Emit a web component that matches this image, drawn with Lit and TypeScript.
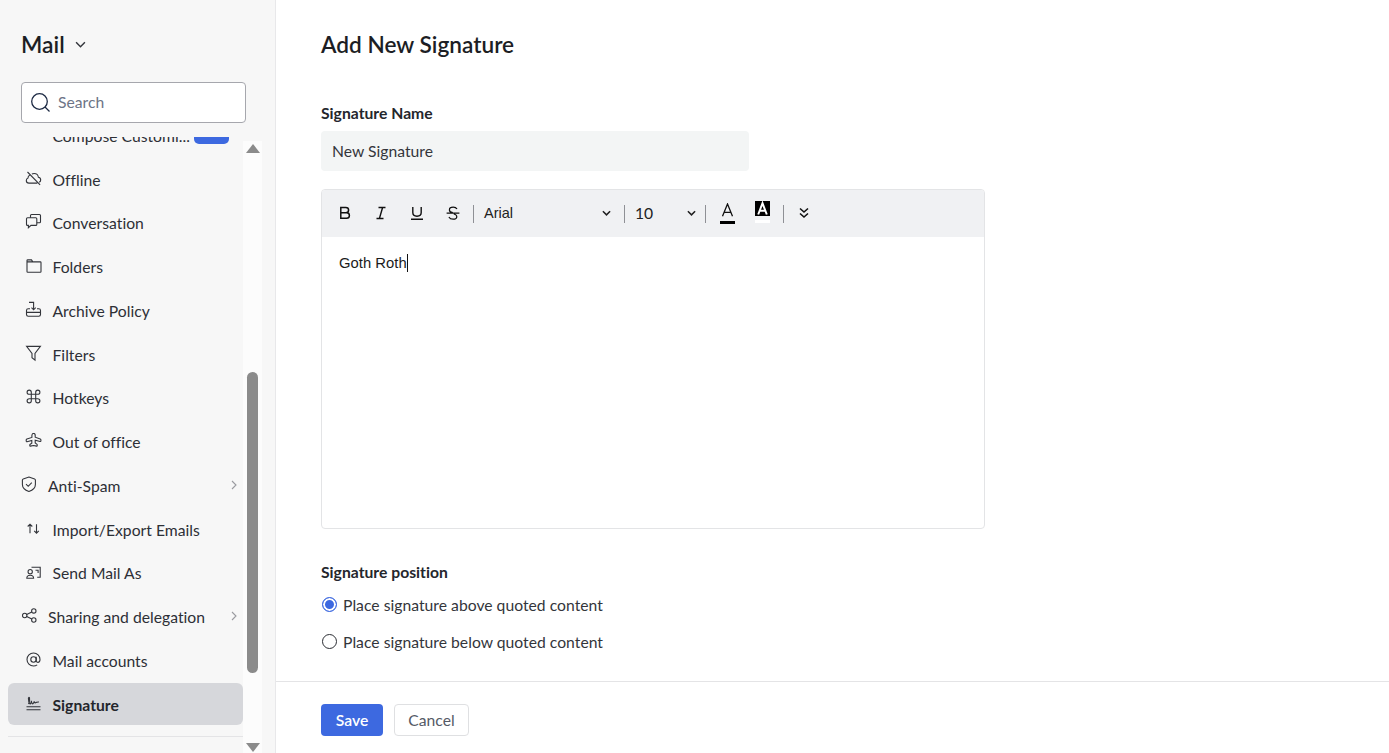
import { LitElement, html, css, svg } from "lit";
import { customElement } from "lit/decorators.js";

const ic: Record<string, any> = {
  offline: svg`<path d="M4.700 5.300C3.600 5.800 3 6.800 3 7.900c-1.100.4-1.700 1.400-1.700 2.500 0 1.500 1.200 2.700 2.700 2.700h8.300M14.200 12.300c.9-.5 1.500-1.400 1.500-2.400 0-1.300-1-2.400-2.300-2.600-.3-2.200-2.100-3.800-4.300-3.800-.8 0-1.500.2-2.200.6M2.500 2l12.600 12.900"/>`,
  conv: svg`<path d="M5.500 4.800V2.500c0-.6.400-1 1-1h8c.6 0 1 .4 1 1v6.300c0 .6-.4 1-1 1h-2.700"/><path d="M2.500 4.800h8.300c.6 0 1 .4 1 1v5.600c0 .6-.4 1-1 1H6l-2.600 2.300v-2.300h-.9c-.6 0-1-.4-1-1V5.800c0-.6.4-1 1-1z"/>`,
  folder: svg`<path d="M2 3.600v11c0 .4.300.7.700.7h12.600c.4 0 .7-.3.700-.7V5.600c0-.4-.3-.7-.7-.7H7.800L6.500 2.900H2.700c-.4 0-.7.3-.7.7zM2 4.900h5.800"/>`,
  archive: svg`<path d="M5 7.800H3.200c-1 0-1.700.7-1.700 1.600v4.200c0 1 .7 1.700 1.700 1.700h10.600c1 0 1.700-.7 1.700-1.700V9.400c0-.9-.7-1.600-1.700-1.600H12M1.500 11.400h14M4 1.400h4.600v7.400M6.500 6.700l2.100 2.100 2.100-2.100"/>`,
  filter: svg`<path d="M1.600 1.400h13.800L10 8.400v6.800l-3-2.400V8.400z"/>`,
  hotkeys: svg`<path d="M6.300 6.300h4.400v4.400H6.300zM6.300 6.300V4.200a2.100 2.100 0 1 0-2.100 2.100zM10.700 6.300h2.100a2.100 2.100 0 1 0-2.100-2.100zM6.300 10.700H4.200a2.100 2.100 0 1 0 2.100 2.100zM10.700 10.700v2.100a2.100 2.100 0 1 0 2.100-2.100z"/>`,
  plane: svg`<path d="M8.500 1.300c1 0 1.700 1 1.700 2.300v1.600l5 1.700c.5.200.7.500.7 1v1c0 .4-.4.700-.8.600l-4.900-1.200v2.700l1.600 1.100c.3.200.4.400.4.700v.9c0 .3-.3.500-.6.400l-3.100-.6-3.100.6c-.3.100-.6-.1-.6-.4V13c0-.3.100-.5.400-.7l1.600-1.100V8.500L2 9.700c-.4.100-.8-.2-.8-.6v-1c0-.5.200-.8.700-1l5-1.700V3.600c0-1.300.7-2.300 1.700-2.300z"/>`,
  shield: svg`<path d="M7.900 1l5.700 1.900c.5.200.8.600.8 1.100v4.400c0 3.300-2.700 5.700-6.500 7.100-3.800-1.400-6.500-3.800-6.500-7.100V4c0-.5.3-.9.800-1.100zM5 8.100l2.200 2.200 3.600-3.700"/>`,
  imp: svg`<path d="M5 13.200V4.200M2.700 6.500L5 4.200l2.300 2.300M11.500 4.200v9M9.200 10.900l2.300 2.300 2.300-2.300"/>`,
  send: svg`<path d="M6.500 4.300h8.700v10h-3M1.800 15.300c0-2 1.500-3 3.400-3s3.400 1 3.400 3zM5.200 10.800a2.100 2.100 0 1 0 0-4.300 2.100 2.100 0 0 0 0 4.300zM10.500 7.300h2.600v2.600"/>`,
  share: svg`<circle cx="3.700" cy="8.500" r="2.200"/><circle cx="12.800" cy="3.900" r="2.200"/><circle cx="12.800" cy="13" r="2.200"/><path d="M5.700 7.500l5.100-2.600M5.700 9.500l5.100 2.600"/>`,
  at: svg`<circle cx="8.500" cy="8.500" r="2.700"/><path d="M11.200 5.800v4c0 .9.700 1.600 1.600 1.600s2.200-.9 2.200-2.900c0-3.600-2.900-6.500-6.500-6.500S2 4.900 2 8.500 4.900 15 8.500 15c1.400 0 2.600-.4 3.700-1.100"/>`,
  sign: svg`<path d="M1.500 14.800h14M1.500 11.800h14M3.500 9c.9-2 1.400-4.500 1-6-.3-1-1.100-.7-1.100.3 0 2 .4 4.500 1.500 5.500.8.500 1.300-1.500 1.500-3 .1 1.800.6 3.300 1.500 3 .7-.2 1-1.500 1.300-2.500.3 1.500 1 2 1.700 1.200.5-.5 1-.6 3.100-.5"/>`,
};

const items: [string, string, boolean?][] = [
  ["offline", "Offline"],
  ["conv", "Conversation"],
  ["folder", "Folders"],
  ["archive", "Archive Policy"],
  ["filter", "Filters"],
  ["hotkeys", "Hotkeys"],
  ["plane", "Out of office"],
  ["shield", "Anti-Spam", true],
  ["imp", "Import/Export Emails"],
  ["send", "Send Mail As"],
  ["share", "Sharing and delegation", true],
  ["at", "Mail accounts"],
];

@customElement("app-root")
export class AppRoot extends LitElement {
  static styles = css`
    :host { display: block; width: 1389px; height: 753px; overflow: hidden; font-family: Lato, "Noto Sans", sans-serif; color: #1f2127; background: #fff; font-size: 15.700px; letter-spacing: .02px; }
    * { box-sizing: border-box; }
    .page { display: flex; height: 753px; }
    .side { width: 276px; flex: none; background: #f7f7f7; border-right: 1px solid #e8e8ea; display: flex; flex-direction: column; height: 753px; }
    .brand { height: 82px; padding: 29px 0 0 21px; display: flex; align-items: flex-start; gap: 10px; font-size: 22.800px; line-height: 30px; font-weight: 600; color: #1c1e24; }
    .brand svg { margin-top: 12px; }
    .search { margin-left: 21px; width: 225px; height: 41px; flex: none; background: #fff; border: 1px solid #a6a7ad; border-radius: 4px; display: flex; align-items: center; padding-left: 8px; gap: 7px; color: #6d7486; padding-bottom: 1px; }
    .body { flex: 1; display: flex; min-height: 0; margin-top: 14px; }
    .listwrap { width: 243px; flex: none; overflow: hidden; }
    .list { margin-top: -23.050px; padding-left: 8px; }
    .item { height: 43.750px; width: 235px; display: flex; align-items: center; padding-left: 17px; gap: 10.500px; color: #2d2f36; position: relative; }
    .item svg.i { width: 17px; height: 17px; flex: none; fill: none; stroke: #33353b; stroke-width: 1.100; margin-top: -3px; }
    .item.g { padding-left: 13px; gap: 10px; }
    .item .chev { position: absolute; right: 6px; top: 16px; }
    .item.sel { height: 42px; background: #d6d7db; border-radius: 6px; font-weight: 700; color: #24262c; padding-top: 2px; }
    .compose { padding-top: 1px; }
    .compose span { white-space: nowrap; }
    .compose .pill { width: 35px; height: 16px; background: #3d69e0; border-radius: 5px; margin-left: -6.500px; }
    .blank { width: 17px; flex: none; }
    .rule { height: 1px; background: #e4e4e6; margin-top: 11px; width: 235px; }
    .track { width: 19px; flex: none; margin-top: 4px; background: #fcfcfc; display: flex; flex-direction: column; align-items: center; }
    .track .sp1 { height: 219px; flex: none; }
    .thumb { width: 11px; height: 301px; border-radius: 6px; background: #8b8b8b; flex: none; }
    .track .sp2 { flex: 1; }
    .main { flex: 1; min-width: 0; display: flex; flex-direction: column; }
    .content { flex: 1; padding: 30px 0 0 45px; }
    h1 { margin: 0; font-size: 22.600px; line-height: 30px; font-weight: 600; color: #1c1e24; }
    .lab { line-height: 20px; font-weight: 700; color: #24262c; }
    .lab.a { margin-top: 43px; }
    .inp { margin-top: 8px; width: 428px; height: 40px; background: #f3f5f5; border-radius: 4px; padding-left: 11px; display: flex; align-items: center; color: #33353b; }
    .editor { margin-top: 18px; width: 664px; height: 340px; border: 1px solid #e3e4e6; border-radius: 4px; overflow: hidden; }
    .tb { height: 47px; padding-bottom: 1px; background: #f0f1f3; display: flex; align-items: center; color: #111; }
    .btn { width: 36px; display: flex; justify-content: center; align-items: center; }
    .tb .first { margin-left: 5px; }
    .sep { width: 1px; height: 18px; margin-top: 1px; background: #8f9095; flex: none; }
    .sep.s1 { margin-left: 2px; }
    .fam { width: 150px; padding: 0 13px 0 10px; font: 14.500px "Liberation Sans", Arial, sans-serif; color: #222; display: flex; align-items: center; justify-content: space-between; }
    .size { width: 80px; padding: 0 9px 0 10px; color: #222; display: flex; align-items: center; justify-content: space-between; }
    .colorbtn { width: 42px; display: flex; justify-content: center; margin-top: 1px; }
    .bgbtn { width: 28px; margin-right: 7px; display: flex; justify-content: center; margin-top: -2px; }
    .more { width: 40px; }
    .ed { padding: 16px 17px; font: 14.800px/20px "Liberation Sans", Arial, sans-serif; color: #1b1b1b; display: flex; align-items: center; }
    .caret { width: 1px; height: 18px; background: #111; }
    .lab.sp { margin-top: 33px; }
    .radio { display: flex; align-items: center; gap: 6px; line-height: 20px; color: #33353b; height: 20px; margin-top: 17px; }
    .radio.first { margin-top: 13px; }
    .rb { width: 15px; height: 15px; margin-left: 1px; border-radius: 50%; border: 1px solid #2b2d33; background: #fff; flex: none; margin-top: -2px; }
    .rb.on { border: 1px solid #3d69e0; box-shadow: inset 0 0 0 2px #fff; background: #3d69e0; }
    .foot { height: 72px; border-top: 1px solid #e4e4e6; display: flex; align-items: flex-start; padding: 22px 0 0 45px; gap: 11px; flex: none; }
    .fbtn { height: 32px; border-radius: 4px; display: flex; align-items: center; justify-content: center; }
    .save { width: 62px; background: #3d69e0; color: #fff; font-weight: 600; }
    .cancel { width: 75px; background: #fff; border: 1px solid #dfe0e2; color: #555a66; }
  `;

  chev(w = 10, h = 6, c = "#222", sw = 1.6) {
    return html`<svg width=${w} height=${h} viewBox="0 0 10 6" fill="none" stroke=${c} stroke-width=${sw}><path d="M1 1l4 4 4-4"/></svg>`;
  }

  render() {
    return html`<div class="page">
      <aside class="side">
        <div class="brand">Mail ${this.chev(11, 7, "#33353b", 1.3)}</div>
        <div class="search">
          <svg width="21" height="21" viewBox="0 0 21 21" fill="none" stroke-width="1.300"><circle cx="9.500" cy="9.500" r="7.800" stroke="#1d2a44"/><path d="M15 15l4.500 4.500" stroke="#1d2a44"/></svg>
          <span>Search</span>
        </div>
        <div class="body">
          <div class="listwrap">
            <div class="list">
              <div class="item compose"><span class="blank"></span><span>Compose Customi...</span><span class="pill"></span></div>
              ${items.map(([k, t, g]) => html`<div class="item ${g ? "g" : ""}">
                <svg class="i" viewBox="0 0 17 17">${ic[k]}</svg><span>${t}</span>
                ${g ? html`<svg class="chev" width="6" height="10" viewBox="0 0 6 10" fill="none" stroke="#9a9ba0" stroke-width="1.100"><path d="M1 1l4 4-4 4"/></svg>` : ""}
              </div>`)}
              <div class="item sel"><svg class="i" viewBox="0 0 17 17">${ic.sign}</svg><span>Signature</span></div>
              <div class="rule"></div>
            </div>
          </div>
          <div class="track">
            <svg width="14" height="9" viewBox="0 0 14 9" style="margin-top:3px"><path d="M7 0l7 9H0z" fill="#8b8b8b"/></svg>
            <div class="sp1"></div>
            <div class="thumb"></div>
            <div class="sp2"></div>
            <svg width="14" height="9" viewBox="0 0 14 9" style="margin-bottom:1px"><path d="M0 0h14L7 9z" fill="#8b8b8b"/></svg>
          </div>
        </div>
      </aside>
      <main class="main">
        <div class="content">
          <h1>Add New Signature</h1>
          <div class="lab a">Signature Name</div>
          <div class="inp">New Signature</div>
          <div class="editor">
            <div class="tb">
              <div class="btn first"><svg width="14" height="14" viewBox="0 0 14 14" fill="none" stroke="#111" stroke-width="1.500"><path d="M2.800 1.500h5c1.700 0 2.800 1 2.800 2.600s-1.100 2.700-2.800 2.700h-5zM2.800 6.800h5.800c1.700 0 2.800 1 2.800 2.700s-1.100 2.800-2.800 2.800H2.800z"/></svg></div>
              <div class="btn"><svg width="14" height="14" viewBox="0 0 14 14" fill="none" stroke="#111" stroke-width="1.400"><path d="M4.500 1.500h7M2.500 12.500h7M8.600 1.500L5.400 12.500"/></svg></div>
              <div class="btn"><svg width="14" height="14" viewBox="0 0 14 14" fill="none" stroke="#111" stroke-width="1.400"><path d="M2.800 1v5.500c0 2.400 1.600 3.700 4.200 3.700s4.200-1.300 4.200-3.700V1M1 13.300h12"/></svg></div>
              <div class="btn"><svg width="14" height="14" viewBox="0 0 14 14" fill="none" stroke="#111" stroke-width="1.200"><path d="M11 3c-.7-1.200-2-1.800-3.800-1.800-2.200 0-3.800 1-3.800 2.700 0 1.400 1 2.300 3.400 2.700M.6 7.200h12.800M7.800 8c1.700.4 3 1.200 3 2.700 0 1.600-1.600 2.500-3.700 2.500-2 0-3.500-.8-4.200-2.200"/></svg></div>
              <div class="sep s1"></div>
              <div class="fam"><span>Arial</span>${this.chev(9, 6, "#222", 1.700)}</div>
              <div class="sep"></div>
              <div class="size"><span>10</span>${this.chev(9, 6, "#222", 1.700)}</div>
              <div class="sep"></div>
              <div class="colorbtn">
                <svg width="15" height="21" viewBox="0 0 15 21"><path d="M2.500 13.300L7.500 1 12.500 13.300M4.200 9.300h6.600" fill="none" stroke="#111" stroke-width="1.300"/><rect x="0" y="18" width="15" height="3" fill="#000"/></svg>
              </div>
              <div class="bgbtn"><svg width="15" height="22" viewBox="0 0 15 22"><rect width="15" height="15" fill="#000"/><path d="M3.200 13.500L7.500 2.200 11.800 13.500M4.800 9.700h5.400" fill="none" stroke="#fff" stroke-width="2"/><rect y="19" width="15" height="3" fill="#fff"/></svg></div>
              <div class="sep"></div>
              <div class="btn more"><svg width="10" height="12" viewBox="0 0 10 12" fill="none" stroke="#111" stroke-width="1.600"><path d="M1 1.500l4 3.500 4-3.500M1 6.500l4 3.500 4-3.500"/></svg></div>
            </div>
            <div class="ed">Goth Roth<span class="caret"></span></div>
          </div>
          <div class="lab sp">Signature position</div>
          <div class="radio first"><span class="rb on"></span>Place signature above quoted content</div>
          <div class="radio"><span class="rb"></span>Place signature below quoted content</div>
        </div>
        <div class="foot">
          <div class="fbtn save">Save</div>
          <div class="fbtn cancel">Cancel</div>
        </div>
      </main>
    </div>`;
  }
}
